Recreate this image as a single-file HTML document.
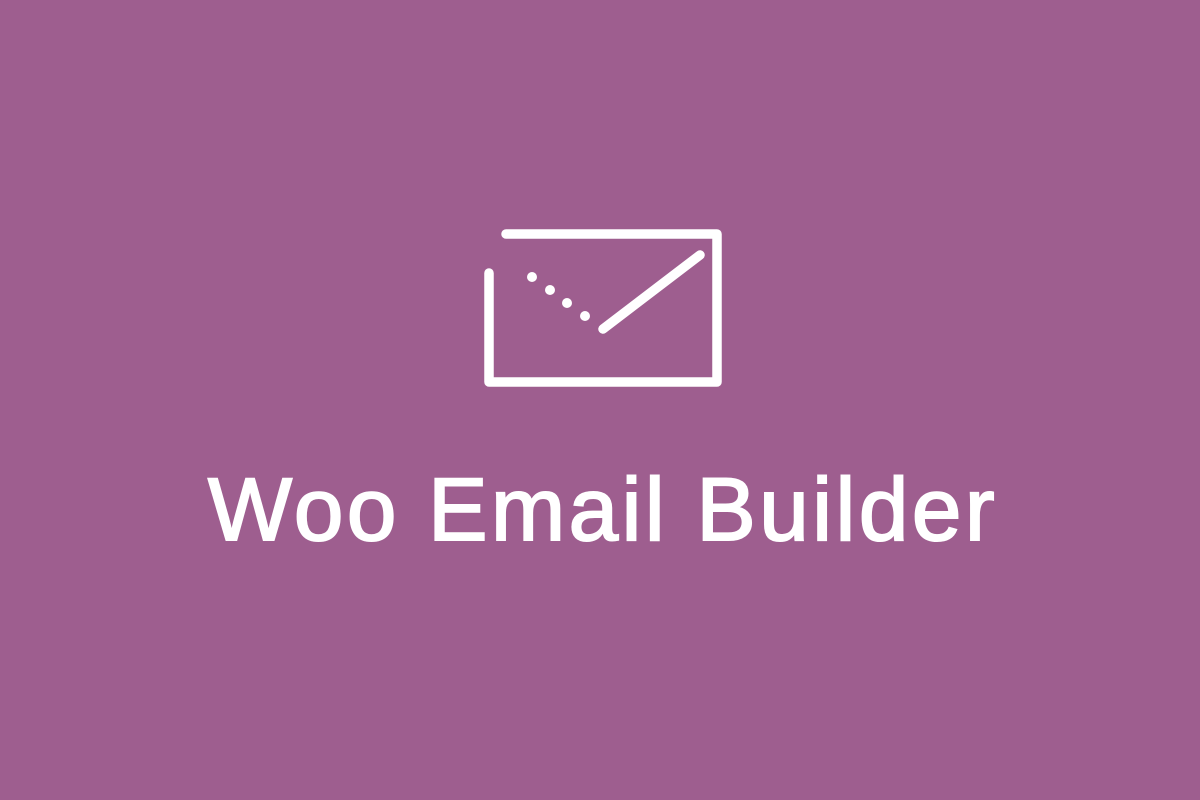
<!DOCTYPE html>
<html><head><style>
html,body{margin:0;padding:0}
body{width:1200px;height:800px;background:#9e5e8f;position:relative;overflow:hidden}
.t{position:absolute;left:0;width:1206px;top:465px;text-align:center;font-family:"Liberation Sans",sans-serif;font-size:89px;line-height:89px;color:#fff;-webkit-text-stroke:2px #fff;letter-spacing:3.5px}
svg{position:absolute;left:0;top:0}
</style></head><body>
<svg width="1200" height="800">
<g stroke="#fff" stroke-width="9.5" fill="none" stroke-linecap="round" stroke-linejoin="round">
<polyline points="506,234 717,234 717,382 489,382 489,273"/>
<line x1="603" y1="329" x2="700" y2="255"/>
</g>
<g fill="#fff">
<circle cx="532" cy="277" r="5"/>
<circle cx="550" cy="290" r="5"/>
<circle cx="567" cy="303" r="5"/>
<circle cx="585" cy="316" r="5"/>
</g>
</svg>
<div class="t">Woo Email Builder</div>
</body></html>
